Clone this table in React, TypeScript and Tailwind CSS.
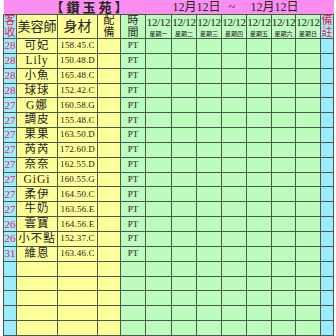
const rows: [string, string, string][] = [
  ["28", "可妃", "158.45.C"],
  ["28", "Lily", "150.48.D"],
  ["28", "小魚", "165.48.C"],
  ["28", "球球", "152.42.C"],
  ["27", "G娜", "160.58.G"],
  ["27", "調皮", "155.48.C"],
  ["27", "果果", "163.50.D"],
  ["27", "芮芮", "172.60.D"],
  ["27", "奈奈", "162.55.D"],
  ["27", "GiGi", "160.55.G"],
  ["27", "柔伊", "164.50.C"],
  ["27", "牛奶", "163.56.E"],
  ["26", "雲寶", "164.56.E"],
  ["26", "小不點", "152.37.C"],
  ["31", "維恩", "163.46.C"],
  ["", "", ""],
  ["", "", ""],
  ["", "", ""],
  ["", "", ""],
  ["", "", ""],
];

const days = ["星期一", "星期二", "星期三", "星期四", "星期五", "星期六", "星期日"];
const dayWidths = [26, 25, 25, 25, 25, 24, 25];

const serif = "font-['Liberation_Serif','Noto_Sans_CJK_TC',serif]";
const cell = "border border-[#4a5a4a] p-0 text-center align-middle leading-none overflow-hidden whitespace-nowrap";

export default function App() {
  return (
    <div className={`w-[336px] h-[336px] bg-white pl-[3px] overflow-hidden ${serif} text-[#222]`}>
      <table className="table-fixed border-collapse w-[330px]">
        <colgroup>
          <col className="w-[13px]" />
          <col className="w-[41px]" />
          <col className="w-[40px]" />
          <col className="w-[23px]" />
          <col className="w-[25px]" />
          {dayWidths.map((w, i) => (
            <col key={i} style={{ width: w }} />
          ))}
          <col className="w-[13px]" />
        </colgroup>
        <tbody>
          <tr>
            <td colSpan={13} className="bg-[#fb8ef0] p-0 border-b border-[#4a5a4a] h-[14px]">
              <div className="flex items-center h-[14px] leading-none whitespace-nowrap">
                <span className="w-[169px] pl-[47px] text-[13px] font-bold tracking-[3px]">【鑽玉苑】</span>
                <span className="text-[12px] w-[56px]">12月12日</span>
                <span className="text-[12px] w-[22px]">~</span>
                <span className="text-[12px]">12月12日</span>
              </div>
            </td>
          </tr>
          <tr>
            <td className={`${cell} h-[24px] bg-[#9cecff] text-[#ee2244] text-[11px]`}>
              <div className="flex flex-col gap-[1px] items-center">
                <span>客</span>
                <span>收</span>
              </div>
            </td>
            <td className={`${cell} bg-[#ffff99] text-[13px]`}>美容師</td>
            <td className={`${cell} bg-[#ffff99] text-[14px]`}>身材</td>
            <td className={`${cell} bg-[#ffff99] text-[11px]`}>
              <div className="flex flex-col gap-[1px] items-center">
                <span>配</span>
                <span>備</span>
              </div>
            </td>
            <td className={`${cell} bg-[#bcfcbc] text-[11px]`}>
              <div className="flex flex-col gap-[1px] items-center">
                <span>時</span>
                <span>間</span>
              </div>
            </td>
            {days.map((d) => (
              <td key={d} className={`${cell} bg-[#bcfcbc]`}>
                <div className="flex flex-col items-center gap-[3px]">
                  <span className="text-[11px] tracking-[-0.3px]">12/12</span>
                  <span className="text-[6px]">{d}</span>
                </div>
              </td>
            ))}
            <td className={`${cell} bg-[#9cecff] text-[#ee2244] text-[11px]`}>
              <div className="flex flex-col gap-[1px] items-center">
                <span>備</span>
                <span>註</span>
              </div>
            </td>
          </tr>
          {rows.map(([n, name, size], i) => (
            <tr key={i}>
              <td className={`${cell} h-[14.85px] bg-[#9cecff] text-[#ee2244] text-[11px]`}>{n}</td>
              <td className={`${cell} bg-[#ffff99] text-[11.5px] tracking-[1px]`}>{name}</td>
              <td className={`${cell} bg-[#ffff99] text-[9px] tracking-[0.2px]`}>{size}</td>
              <td className={`${cell} bg-[#ffff99]`}></td>
              <td className={`${cell} bg-[#bcfcbc] text-[9px]`}>{name ? "PT" : ""}</td>
              {days.map((d) => (
                <td key={d} className={`${cell} bg-[#bcfcbc]`}></td>
              ))}
              <td className={`${cell} bg-[#9cecff]`}></td>
            </tr>
          ))}
        </tbody>
      </table>
    </div>
  );
}
